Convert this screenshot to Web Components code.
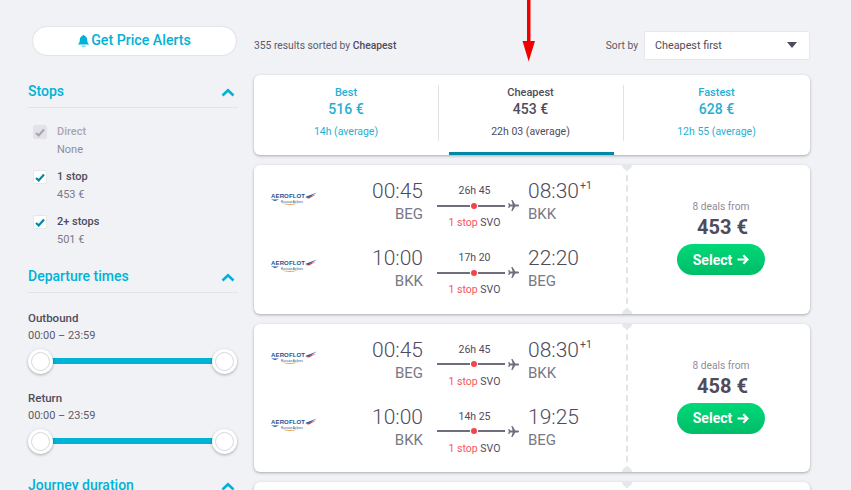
<!DOCTYPE html>
<html lang="en">
<head>
<meta charset="UTF-8">
<title>Flight results</title>
<style>
  html, body { margin: 0; height: 490px; overflow: hidden; background: #f1f2f5; }
  body { font-family: Roboto, "Liberation Sans", sans-serif; color: #4f4b5c; }
  #page { display: flex; align-items: flex-start; gap: 16px; padding-left: 28px; position: relative; height: 490px; overflow: hidden; }
</style>
</head>
<body>
<div id="page">
  <filter-sidebar>
    <alert-button>Get Price Alerts</alert-button>
    <filter-section heading="Stops">
      <stop-option label="Direct" sub="None" disabled></stop-option>
      <stop-option label="1 stop" sub="453 €"></stop-option>
      <stop-option label="2+ stops" sub="501 €"></stop-option>
    </filter-section>
    <filter-section heading="Departure times">
      <time-range label="Outbound" range="00:00 – 23:59"></time-range>
      <time-range label="Return" range="00:00 – 23:59"></time-range>
    </filter-section>
    <filter-section heading="Journey duration"></filter-section>
  </filter-sidebar>
  <results-list>
    <sort-bar></sort-bar>
    <sort-tabs></sort-tabs>
    <flight-card deals="8 deals from" price="453 €">
      <flight-leg dep="00:45" from="BEG" dur="26h 45" arr="08:30" plus="+1" to="BKK"></flight-leg>
      <flight-leg dep="10:00" from="BKK" dur="17h 20" arr="22:20" to="BEG"></flight-leg>
    </flight-card>
    <flight-card deals="8 deals from" price="458 €">
      <flight-leg dep="00:45" from="BEG" dur="26h 45" arr="08:30" plus="+1" to="BKK"></flight-leg>
      <flight-leg dep="10:00" from="BKK" dur="14h 25" arr="19:25" to="BEG"></flight-leg>
    </flight-card>
    <flight-card empty></flight-card>
  </results-list>
  <red-arrow></red-arrow>
</div>

<script>
// 공통: shadow root 만들기
function mount(el, css, html) {
  const shadow = el.attachShadow({ mode: 'open' });
  shadow.innerHTML = `<style>${css}</style>${html}`;
  return shadow;
}

class FilterSidebar extends HTMLElement {
  constructor() {
    super();
    mount(this, `:host { display: block; width: 210px; flex: none; padding-top: 26px; }`, `<slot></slot>`);
  }
}

class AlertButton extends HTMLElement {
  constructor() {
    super();
    mount(this, `
      :host { display: flex; align-items: center; justify-content: center; gap: 2px; box-sizing: border-box;
        width: 205px; height: 30px; margin: 0 0 26px 4px; background: #fff; border: 1px solid #e4e5ea; border-radius: 15px;
        color: #00b2d6; font: 500 14.200px Roboto, sans-serif; box-shadow: 0 0 1px #e4e5ea; padding-bottom: 2px; }
      svg { width: 11px; height: 12px; margin-top: 2px; }
    `, `<svg viewBox="0 0 11 12"><path fill="#00b2d6" d="M5.500 0C6.200 0 6.600.5 6.600 1 8.400 1.500 9.200 3 9.200 4.800c0 2 .5 3.200 1.600 4.200v.6H.2V9C1.300 8 1.800 6.800 1.800 4.800 1.800 3 2.600 1.500 4.400 1 4.400.5 4.800 0 5.500 0zM3.500 10.700h4v.9h-4z"/></svg><slot></slot>`);
  }
}

class FilterSection extends HTMLElement {
  constructor() {
    super();
    mount(this, `
      :host { display: block; margin-bottom: 18px; }
      header { display: flex; justify-content: space-between; align-items: center; height: 18px; padding-bottom: 7px;
        border-bottom: 1px solid #e2e3e8; color: #00b2d6; font: 500 14px Roboto, sans-serif; }
      svg { width: 14px; height: 9px; margin-right: 3px; margin-top: 3px; }
      .body { padding-top: 16px; }
    `, `<header><span>${this.getAttribute('heading')}</span>
      <svg viewBox="0 0 14 9"><path fill="none" stroke="#00b2d6" stroke-width="2.600" d="M1.500 7.500 7 2.300l5.500 5.200"/></svg></header>
      <div class="body"><slot></slot></div>`);
  }
}

class StopOption extends HTMLElement {
  constructor() {
    super();
    const off = this.hasAttribute('disabled');
    mount(this, `
      :host { display: grid; grid-template-columns: 14px 1fr; column-gap: 10px; margin: 0 0 10px 5px;
        font: 11px/18px Roboto, sans-serif; }
      .box { width: 14px; height: 14px; margin-top: 1px; box-sizing: border-box; border-radius: 2px;
        background: ${off ? '#e2e2e8' : '#fff'}; border: 1px solid ${off ? '#e2e2e8' : '#e8e8ec'}; display: flex; align-items: center; justify-content: center; }
      svg { width: 10px; height: 9px; }
      .label { font-weight: 500; color: ${off ? '#a9a6b4' : '#4f4b5c'}; height: 18px; margin-top: -1px; }
      .sub { grid-column: 2; color: ${off ? '#8f8c9a' : '#7b7886'}; }
    `, `<div class="box"><svg viewBox="0 0 10 9"><path fill="none" stroke="${off ? '#a9a6b4' : '#0088a8'}" stroke-width="2.200" d="M1 5l2.700 2.400L9 1.500"/></svg></div>
      <div class="label">${this.getAttribute('label')}</div>
      <div class="sub">${this.getAttribute('sub')}</div>`);
  }
}

class TimeRange extends HTMLElement {
  constructor() {
    super();
    mount(this, `
      :host { display: block; margin-bottom: 15px; }
      :host(:last-child) { margin-bottom: 22px; }
      .label { font: 500 11.500px/18px Roboto, sans-serif; color: #4f4b5c; }
      .range { font: 11px/18px Roboto, sans-serif; color: #5c5968; margin-bottom: 3px; }
      .track { display: flex; align-items: center; justify-content: space-between; height: 26px; margin-right: 1px; position: relative; }
      .track::before { content: ''; position: absolute; left: 20px; right: 20px; top: 10px; height: 6px; background: #00b2d6; }
      i { position: relative; display: block; width: 25px; height: 25px; box-sizing: border-box; border-radius: 50%; background: #fff;
        box-shadow: 0 1px 3px rgba(0,0,0,.3); }
      i::after { content: ''; position: absolute; inset: 3px; border: 1px solid #d7d8de; border-radius: 50%; }
    `, `<div class="label">${this.getAttribute('label')}</div>
      <div class="range">${this.getAttribute('range')}</div>
      <div class="track"><i></i><i></i></div>`);
  }
}

class ResultsList extends HTMLElement {
  constructor() {
    super();
    mount(this, `:host { display: flex; flex-direction: column; gap: 10px; width: 556px; flex: none; padding-top: 31px; }`, `<slot></slot>`);
  }
}

class SortBar extends HTMLElement {
  constructor() {
    super();
    mount(this, `
      :host { display: flex; align-items: center; flex: none; height: 28px; margin-bottom: 6px; font: 10.300px Roboto, sans-serif; color: #5c5968; }
      b { font-weight: 500; color: #4f4b5c; }
      .count { flex: 1; }
      .sort { margin-right: 6px; }
      .select { box-sizing: border-box; width: 166px; height: 29px; background: #fff; border: 1px solid #e6e7eb; border-radius: 2px;
        display: flex; align-items: center; justify-content: space-between; padding: 0 12px 0 10px; font-size: 10.800px; color: #4f4b5c; }
      .caret { width: 0; height: 0; border: 5px solid transparent; border-top: 6px solid #4f4b5c; border-bottom: 0; }
    `, `<div class="count">355 results sorted by <b>Cheapest</b></div>
      <div class="sort">Sort by</div>
      <div class="select"><span>Cheapest first</span><span class="caret"></span></div>`);
  }
}

class SortTabs extends HTMLElement {
  constructor() {
    super();
    const tabs = [
      { name: 'Best', price: '516 €', avg: '14h (average)' },
      { name: 'Cheapest', price: '453 €', avg: '22h 03 (average)', on: true },
      { name: 'Fastest', price: '628 €', avg: '12h 55 (average)' }
    ];
    mount(this, `
      :host { display: grid; grid-template-columns: 184px 185px 187px; flex: none; height: 80px; background: #fff; border-radius: 6px;
        box-shadow: 0 1px 3px rgba(0,0,0,.3); position: relative; overflow: hidden; }
      .tab { position: relative; display: flex; flex-direction: column; align-items: center; color: #1fafd6; padding-top: 11px; }
      .tab + .tab::before { content: ''; position: absolute; left: 0; top: 10px; height: 56px; width: 1px; background: #e2e3e8; }
      .tab.on { color: #4f4b5c; }
      .tab.on::after { content: ''; position: absolute; left: 11px; right: 9px; bottom: 0; height: 3px; background: #0088a8; }
      .name { font: 500 11px/13px Roboto, sans-serif; }
      .price { font: 500 14px/20px Roboto, sans-serif; margin-bottom: 5px; }
      .avg { font: 10.500px/16px Roboto, sans-serif; }
    `, tabs.map(t => `<div class="tab${t.on ? ' on' : ''}"><div class="name">${t.name}</div><div class="price">${t.price}</div><div class="avg">${t.avg}</div></div>`).join(''));
  }
}

class FlightCard extends HTMLElement {
  constructor() {
    super();
    const empty = this.hasAttribute('empty');
    mount(this, `
      :host { display: grid; grid-template-columns: 374px 182px; height: 148.500px; flex: none; background: #fff; border-radius: 6px;
        box-shadow: 0 1px 3px rgba(0,0,0,.3); position: relative; overflow: hidden; }
      .legs { display: flex; flex-direction: column; gap: 15px; padding-top: 14px; border-right: 2px dashed #e3e4e9; box-sizing: border-box; height: 100%; }
      .notch { position: absolute; left: 368px; width: 10px; height: 10px; border-radius: 50%; background: #e6e7eb; }
      .notch.top { top: -5px; }
      .notch.bot { bottom: -5px; }
      .buy { display: flex; flex-direction: column; align-items: center; padding: 35px 0 0 4px; }
      .deals { font: 10.200px/14px Roboto, sans-serif; color: #8f8c9a; }
      .price { font: 700 20px/26px Roboto, sans-serif; color: #4f4b5c; margin: 0 0 4px 3px; }
      .select { display: flex; align-items: center; justify-content: center; gap: 5px; width: 88px; height: 31px; border-radius: 16px;
        background: linear-gradient(#00d978, #00bd68); color: #fff; font: 700 14px Roboto, sans-serif; }
      svg { width: 12px; height: 11px; }
    `, `<div class="notch top"></div><div class="notch bot"></div>
      <div class="legs"><slot></slot></div>` + (empty ? '' : `<div class="buy">
        <div class="deals">${this.getAttribute('deals')}</div>
        <div class="price">${this.getAttribute('price')}</div>
        <div class="select">Select <svg viewBox="0 0 11 10"><path fill="none" stroke="#fff" stroke-width="2" d="M.500 5H9M5.800 1l3.800 4-3.800 4"/></svg></div>
      </div>`));
  }
}

class FlightLeg extends HTMLElement {
  constructor() {
    super();
    const a = n => this.getAttribute(n) || '';
    mount(this, `
      :host { display: grid; grid-template-columns: 112px 57px 105px 1fr; height: 52px; align-items: start; }
      air-logo { margin: 13px 0 0 17px; }
      .time { font: 300 21px/25px Roboto, sans-serif; color: #4f4b5c; }
      .code { font: 15px/20px Roboto, sans-serif; color: #7b7886; }
      .dep { text-align: right; }
      .mid { display: flex; flex-direction: column; align-items: flex-start; padding-left: 14px; margin-top: 4px; }
      .dur { width: 75px; text-align: center; font: 10.500px/16px Roboto, sans-serif; color: #4f4b5c; }
      .line { display: flex; align-items: center; height: 13px; width: 84px; }
      .seg { width: 33px; height: 2px; background: #706d7c; }
      .seg + .dot + .seg { width: 27px; }
      .dot { width: 6px; height: 6px; border-radius: 50%; background: #f5424c; margin: 0 1px 0 1px; }
      .line svg { width: 11px; height: 11px; margin-left: 3px; }
      .stop { width: 75px; margin-top: 3px; text-align: center; font: 10.500px/16px Roboto, sans-serif; color: #4f4b5c; white-space: nowrap; }
      .stop span { color: #f9545c; }
      sup { font-size: 10.500px; font-weight: 400; line-height: 0; vertical-align: 9px; margin-left: 1px; }
    `, `<air-logo></air-logo>
      <div class="dep"><div class="time">${a('dep')}</div><div class="code">${a('from')}</div></div>
      <div class="mid"><div class="dur">${a('dur')}</div>
        <div class="line"><div class="seg"></div><div class="dot"></div><div class="seg"></div>
          <svg viewBox="0 0 11 11"><path fill="#706d7c" d="M11 5.500c0-.6-.6-1-1.300-1H7.300L4.500 0H3.300l1.400 4.500H2.200L1.200 3H.2l.6 2.500-.6 2.500h1l1-1.500h2.500L3.300 11h1.200l2.800-4.500h2.400c.7 0 1.300-.4 1.300-1z"/></svg></div>
        <div class="stop"><span>1 stop</span> SVO</div></div>
      <div class="arr"><div class="time">${a('arr')}${a('plus') ? `<sup>${a('plus')}</sup>` : ''}</div><div class="code">${a('to')}</div></div>`);
  }
}

class AirLogo extends HTMLElement {
  constructor() {
    super();
    mount(this, `:host { display: block; width: 46px; height: 14px; } svg { display: block; }`,
      `<svg width="46" height="14" viewBox="0 0 46 14">
        <text x="0" y="6" font-family="Liberation Sans, sans-serif" font-weight="700" font-size="6" fill="#1d4f91" textLength="34">AEROFLOT</text>
        <path d="M34 5 46 .5 37 6z" fill="#2a5ca8"/><path d="M35 6 45 2.500 38 6.500z" fill="#d8343c"/>
        <path d="M0 7.500h8L4 9z" fill="#1d4f91"/>
        <text x="10" y="10.500" font-family="Liberation Sans, sans-serif" font-size="3" fill="#1d4f91" textLength="22">Russian Airlines</text>
        <path d="M11 11.500c5 2 11 2 17-.5-5 1-11 1.200-17 .5z" fill="#f0a050"/>
      </svg>`);
  }
}

class RedArrow extends HTMLElement {
  constructor() {
    super();
    mount(this, `:host { position: absolute; left: 522px; top: 0; width: 13px; height: 62px; } svg { display: block; }`,
      `<svg width="13" height="62" viewBox="0 0 13 62"><path fill="#f00000" d="M5 0h3.500v41H13L6.700 61.500.5 41H5z"/></svg>`);
  }
}

customElements.define('filter-sidebar', FilterSidebar);
customElements.define('alert-button', AlertButton);
customElements.define('filter-section', FilterSection);
customElements.define('stop-option', StopOption);
customElements.define('time-range', TimeRange);
customElements.define('results-list', ResultsList);
customElements.define('sort-bar', SortBar);
customElements.define('sort-tabs', SortTabs);
customElements.define('flight-card', FlightCard);
customElements.define('flight-leg', FlightLeg);
customElements.define('air-logo', AirLogo);
customElements.define('red-arrow', RedArrow);
</script>
</body>
</html>
